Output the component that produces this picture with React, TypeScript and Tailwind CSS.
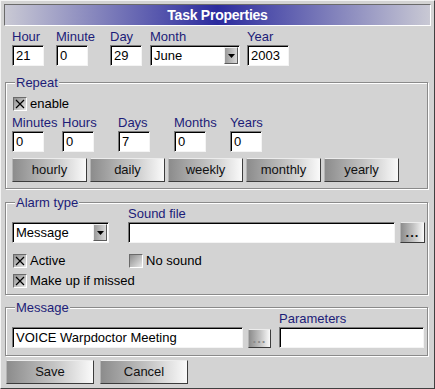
import React from 'react';

const labelCls = 'block h-[17px] text-[13px] leading-[17px] text-[#1c1c78] whitespace-nowrap';

function Field({ value = '', className = '' }: { value?: string; className?: string }) {
  return (
    <div
      className={`h-[21px] bg-white border border-t-[#7a7a7a] border-l-[#7a7a7a] border-b-[#f4f4f4] border-r-[#f4f4f4] shadow-[inset_1px_1px_0_#000] pl-[3px] text-[13px] leading-[19px] text-black overflow-hidden whitespace-nowrap ${className}`}
    >
      {value}
    </div>
  );
}

function LabeledField({ label, value, className = '', w }: { label: string; value?: string; className?: string; w: string }) {
  return (
    <div className={`flex flex-col ${className}`}>
      <span className={labelCls}>{label}</span>
      <Field value={value} className={w} />
    </div>
  );
}

function Combo({ value, className = '' }: { value: string; className?: string }) {
  return (
    <div
      className={`h-[21px] flex bg-white border border-t-[#7a7a7a] border-l-[#7a7a7a] border-b-[#f4f4f4] border-r-[#f4f4f4] shadow-[inset_1px_1px_0_#000] ${className}`}
    >
      <span className="flex-1 pl-[3px] text-[13px] leading-[19px] text-black">{value}</span>
      <span className="w-[14px] h-[17px] mt-[1px] mr-[1px] flex items-center justify-center bg-[linear-gradient(to_right,#9a9a9a,#d8d8d8)] border border-t-[#f0f0f0] border-l-[#f0f0f0] border-b-[#5a5a5a] border-r-[#5a5a5a]">
        <svg width="7" height="4" viewBox="0 0 7 4">
          <path d="M0 0h7L3.5 4z" fill="#000" />
        </svg>
      </span>
    </div>
  );
}

function Btn({ children, className = '' }: { children: React.ReactNode; className?: string }) {
  return (
    <button
      className={`h-[24px] text-[13px] leading-[20px] font-normal text-[#111] bg-[linear-gradient(to_right,#8c8c8c,#c4c4c4_55%,#fafafa)] border border-t-[#ececec] border-l-[#b4b4b4] border-b-[#3c3c3c] border-r-[#3c3c3c] ${className}`}
    >
      {children}
    </button>
  );
}

function Check({ checked, label }: { checked?: boolean; label: string }) {
  return (
    <div className="flex items-center h-[14px]">
      <span className="w-[14px] h-[14px] flex items-center justify-center bg-[linear-gradient(135deg,#8e8e8e,#e8e8e8)] border border-t-[#6a6a6a] border-l-[#6a6a6a] border-b-white border-r-white">
        {checked && (
          <svg width="10" height="10" viewBox="0 0 10 10">
            <path d="M1 1L9 9M9 1L1 9" stroke="#000" strokeWidth="1.2" />
          </svg>
        )}
      </span>
      <span className="ml-[3px] text-[13px] leading-[14px] text-black whitespace-nowrap">{label}</span>
    </div>
  );
}

function Group({ title, className = '', children }: { title: string; className?: string; children: React.ReactNode }) {
  return (
    <div
      className={`relative ml-[4px] mr-[6px] pl-[6px] border border-[#8a8a8a] shadow-[inset_1px_1px_0_#fff,1px_1px_0_#fff] ${className}`}
    >
      <span className="absolute -top-[9px] left-[9px] px-[1px] bg-[#d3d3d3] text-[13px] leading-[17px] text-[#1c1c78]">
        {title}
      </span>
      {children}
    </div>
  );
}

export default function App() {
  return (
    <div className="w-[435px] h-[389px] flex flex-col bg-[#d3d3d3] border border-t-[#f4f4f4] border-l-[#f4f4f4] border-b-[#404040] border-r-[#404040] font-['Liberation_Sans',Arial,sans-serif] overflow-hidden">
      {/* Title bar */}
      <div className="mt-[3px] mx-[3px] h-[22px] flex items-center justify-center bg-[linear-gradient(to_right,#c9c9d4,#2b2b9e_50%,#c9c9d4)] border border-t-[#6a6a6a] border-l-[#6a6a6a] border-b-white border-r-white">
        <span className="text-white font-bold text-[14px] tracking-[-0.25px] leading-[16px]">Task Properties</span>
      </div>

      {/* Date row */}
      <div className="flex pl-[11px] mt-[2px]">
        <LabeledField label="Hour" value="21" w="w-[32px]" className="w-[32px]" />
        <LabeledField label="Minute" value="0" w="w-[32px]" className="w-[32px] ml-[12px]" />
        <LabeledField label="Day" value="29" w="w-[32px]" className="w-[32px] ml-[22px]" />
        <div className="flex flex-col w-[90px] ml-[8px]">
          <span className={labelCls}>Month</span>
          <Combo value="June" className="w-[90px]" />
        </div>
        <LabeledField label="Year" value="2003" w="w-[42px]" className="w-[42px] ml-[7px]" />
      </div>

      {/* Repeat */}
      <Group title="Repeat" className="mt-[16px] pt-[14px] pb-[6px]">
        <div className="pl-[1px]">
          <Check checked label="enable" />
        </div>
        <div className="flex mt-[3px]">
          <LabeledField label="Minutes" value="0" w="w-[32px]" className="w-[32px]" />
          <LabeledField label="Hours" value="0" w="w-[32px]" className="w-[32px] ml-[18px]" />
          <LabeledField label="Days" value="7" w="w-[32px]" className="w-[32px] ml-[24px]" />
          <LabeledField label="Months" value="0" w="w-[32px]" className="w-[32px] ml-[24px]" />
          <LabeledField label="Years" value="0" w="w-[32px]" className="w-[32px] ml-[24px]" />
        </div>
        <div className="flex gap-[3px] mt-[6px]">
          <Btn className="w-[75px]">hourly</Btn>
          <Btn className="w-[75px]">daily</Btn>
          <Btn className="w-[75px]">weekly</Btn>
          <Btn className="w-[75px]">monthly</Btn>
          <Btn className="w-[75px]">yearly</Btn>
        </div>
      </Group>

      {/* Alarm type */}
      <Group title="Alarm type" className="mt-[13px] pt-[2px] pb-[6px]">
        <div className="flex items-end">
          <Combo value="Message" className="w-[97px]" />
          <div className="flex flex-col ml-[19px]">
            <span className={labelCls}>Sound file</span>
            <Field className="w-[267px]" />
          </div>
          <Btn className="w-[25px] !h-[21px] ml-[5px] !leading-[14px] !font-bold tracking-[1px]">...</Btn>
        </div>
        <div className="flex mt-[11px] pl-[1px]">
          <div className="w-[116px]">
            <Check checked label="Active" />
          </div>
          <Check label="No sound" />
        </div>
        <div className="mt-[6px] pl-[1px]">
          <Check checked label="Make up if missed" />
        </div>
      </Group>

      {/* Message */}
      <Group title="Message" className="mt-[12px] pt-[2px] pb-[7px]">
        <div className="flex items-end">
          <Field value="VOICE Warpdoctor Meeting" className="w-[231px]" />
          <Btn className="w-[23px] !h-[19px] ml-[5px] !leading-[12px] !text-[#8a8a8a] !font-bold tracking-[1px]">...</Btn>
          <div className="flex flex-col ml-[8px]">
            <span className={labelCls}>Parameters</span>
            <Field className="w-[145px]" />
          </div>
        </div>
      </Group>

      {/* Footer buttons */}
      <div className="flex mt-[4px] ml-[5px]">
        <Btn className="w-[88px]">Save</Btn>
        <Btn className="w-[88px] ml-[6px]">Cancel</Btn>
      </div>
    </div>
  );
}
